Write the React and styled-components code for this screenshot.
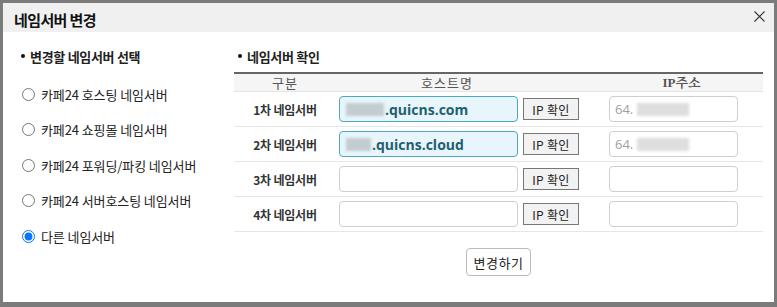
import React from "react";
import styled, { createGlobalStyle } from "styled-components";

const GlobalStyle = createGlobalStyle`
  html, body {
    margin: 0;
    padding: 0;
    background: #7b7b7b;
    font-family: "Noto Sans CJK KR", "Noto Sans", sans-serif;
  }
`;

const Dialog = styled.div`
  width: 771px;
  height: 299px;
  margin: 3px 0 0 3px;
  background: #fff;
  display: flex;
  flex-direction: column;
`;

const Header = styled.div`
  height: 29px;
  background: #f0f0f0;
  display: flex;
  align-items: center;
  justify-content: space-between;
  padding: 0 9px 0 11px;
  h1 {
    margin: 0;
    font-size: 15px;
    font-weight: 700;
    color: #111;
    letter-spacing: -0.6px;
    padding-top: 3px;
  }
`;

const Close = styled.button`
  border: 0;
  background: none;
  padding: 0;
  width: 11px;
  height: 11px;
  margin-top: -3px;
  display: flex;
  cursor: pointer;
`;

const Body = styled.div`
  display: flex;
  padding: 15px 0 0 14px;
  flex: 1;
`;

const LeftCol = styled.div`
  width: 217px;
  display: flex;
  flex-direction: column;
`;

const RightCol = styled.div`
  width: 529px;
  display: flex;
  flex-direction: column;
`;

const SectionTitle = styled.div`
  display: flex;
  align-items: center;
  gap: 5px;
  height: 18px;
  font-size: 13px;
  font-weight: 700;
  color: #222;
  letter-spacing: -0.3px;
  &::before {
    content: "";
    width: 4px;
    height: 4px;
    border-radius: 50%;
    background: #111;
    margin-left: 4px;
  }
`;

const RadioList = styled.div`
  display: flex;
  flex-direction: column;
  gap: 17.5px;
  margin-top: 20px;
`;

const RadioRow = styled.label`
  display: flex;
  align-items: center;
  height: 18px;
  font-size: 13px;
  color: #222;
  letter-spacing: -0.1px;
  input {
    margin: 0 6px 0 5px;
    width: 13px;
    height: 13px;
    accent-color: #0a74ff;
  }
`;

const Table = styled.div`
  margin-top: 7px;
  border-top: 2px solid #666;
`;

const HeadRow = styled.div`
  display: grid;
  grid-template-columns: 102px 264px 163px;
  height: 17px;
  background: #f5f5f5;
  border-bottom: 1px solid #e6e6e6;
  align-items: center;
  color: #555;
`;

const HeadCell = styled.div`
  text-align: center;
  line-height: 17px;
  padding-right: ${(p) => p.$shift || 0}px;
  font-family: ${(p) => (p.$serif ? '"Liberation Serif", "Noto Serif CJK KR", "Noto Sans CJK KR", serif' : "inherit")};
  font-weight: ${(p) => (p.$serif ? 700 : 400)};
  font-size: 13px;
  letter-spacing: ${(p) => (p.$serif ? 0 : 1)}px;
`;

const Row = styled.div`
  display: grid;
  grid-template-columns: 102px 264px 163px;
  height: 34px;
  border-bottom: 1px solid #e6e6e6;
  align-items: center;
`;

const Label = styled.div`
  text-align: center;
  font-size: 12px;
  font-weight: 700;
  color: #333;
  letter-spacing: -0.2px;
`;

const HostCell = styled.div`
  display: flex;
  align-items: center;
  gap: 5px;
  padding-left: 3px;
`;

const Field = styled.div`
  box-sizing: border-box;
  width: ${(p) => p.$w}px;
  height: 26px;
  border-radius: 4px;
  border: 1px solid ${(p) => (p.$filled ? "#4aa9c0" : "#cfcfcf")};
  background: ${(p) => (p.$filled ? "#e8f6fc" : "#fff")};
  display: flex;
  align-items: center;
  padding-left: 5px;
  font-size: ${(p) => (p.$filled ? 14 : 13)}px;
  font-weight: ${(p) => (p.$filled ? 700 : 400)};
  color: ${(p) => (p.$filled ? "#1f5f70" : "#a0a0a0")};
  font-family: "Open Sans", "Noto Sans", sans-serif;
`;

const Blur = styled.span`
  display: inline-block;
  width: ${(p) => p.$w}px;
  height: 13px;
  background: ${(p) => p.$c || "#c3ccd0"};
  filter: blur(1.5px);
  margin: 0 1px 0 ${(p) => p.$ml || 0}px;
`;

const IpButton = styled.button`
  box-sizing: border-box;
  width: 56px;
  height: 22px;
  border: 1px solid #777;
  background: #f2f2f2;
  font-family: "Noto Sans CJK KR", sans-serif;
  font-size: 12px;
  color: #222;
  padding: 0;
  letter-spacing: 0.3px;
`;

const IpCell = styled.div`
  padding-left: 9px;
`;

const Footer = styled.div`
  display: flex;
  justify-content: center;
  margin-top: 16px;
`;

const SubmitButton = styled.button`
  box-sizing: border-box;
  width: 65px;
  height: 28px;
  border: 1px solid #bbb;
  border-radius: 4px;
  background: #fff;
  font-family: "Noto Sans CJK KR", sans-serif;
  font-size: 13px;
  color: #222;
  padding: 0;
  letter-spacing: 0.5px;
`;

const options = [
  "카페24 호스팅 네임서버",
  "카페24 쇼핑몰 네임서버",
  "카페24 포워딩/파킹 네임서버",
  "카페24 서버호스팅 네임서버",
  "다른 네임서버",
];

const servers = [
  { label: "1차 네임서버", host: ".quicns.com", blur: 38, ip: true },
  { label: "2차 네임서버", host: ".quicns.cloud", blur: 25, ip: true },
  { label: "3차 네임서버" },
  { label: "4차 네임서버" },
];

export default function App() {
  return (
    <>
      <GlobalStyle />
      <Dialog>
        <Header>
          <h1>네임서버 변경</h1>
          <Close aria-label="닫기">
            <svg width="11" height="11" viewBox="0 0 11 11">
              <path d="M0.5 0.5L10.5 10.5M10.5 0.5L0.5 10.5" stroke="#333" strokeWidth="1.1" />
            </svg>
          </Close>
        </Header>
        <Body>
          <LeftCol>
            <SectionTitle>변경할 네임서버 선택</SectionTitle>
            <RadioList>
              {options.map((o, i) => (
                <RadioRow key={o}>
                  <input type="radio" name="ns" defaultChecked={i === 4} />
                  {o}
                </RadioRow>
              ))}
            </RadioList>
          </LeftCol>
          <RightCol>
            <SectionTitle>네임서버 확인</SectionTitle>
            <Table>
              <HeadRow>
                <HeadCell>구분</HeadCell>
                <HeadCell $shift={42}>호스트명</HeadCell>
                <HeadCell $serif>IP주소</HeadCell>
              </HeadRow>
              {servers.map((s) => (
                <Row key={s.label}>
                  <Label>{s.label}</Label>
                  <HostCell>
                    <Field $w={179} $filled={!!s.host}>
                      {s.host && (
                        <>
                          <Blur $w={s.blur} $ml={1} />
                          {s.host}
                        </>
                      )}
                    </Field>
                    <IpButton>IP 확인</IpButton>
                  </HostCell>
                  <IpCell>
                    <Field $w={129}>
                      {s.ip && (
                        <>
                          64.
                          <Blur $w={52} $c="#dedede" $ml={4} />
                        </>
                      )}
                    </Field>
                  </IpCell>
                </Row>
              ))}
            </Table>
            <Footer>
              <SubmitButton>변경하기</SubmitButton>
            </Footer>
          </RightCol>
        </Body>
      </Dialog>
    </>
  );
}
